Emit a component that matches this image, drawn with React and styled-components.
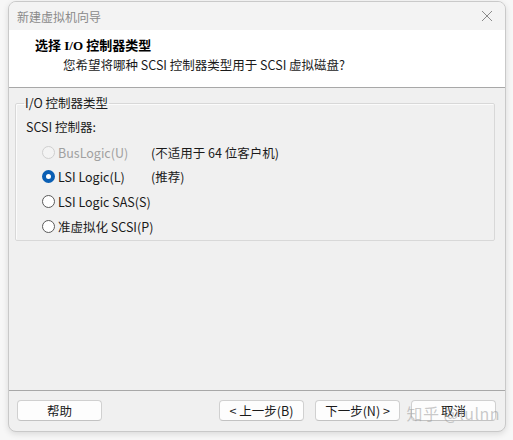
import styled, { createGlobalStyle } from 'styled-components';

const Global = createGlobalStyle`
  html, body { margin: 0; padding: 0; background: #f7f7f7; }
  body { font-family: "Segoe UI", "Noto Sans", "Noto Sans CJK SC", sans-serif; }
`;

const Page = styled.div`
  width: 513px;
  height: 440px;
  padding: 1px 0 0 8px;
  box-sizing: border-box;
`;

const Window = styled.div`
  position: relative;
  width: 498px;
  height: 431px;
  box-sizing: border-box;
  border: 1px solid #c9c9c9;
  border-radius: 8px;
  background: #f0f0f0;
  box-shadow: 0 2px 6px rgba(0, 0, 0, 0.12);
  overflow: hidden;
  display: flex;
  flex-direction: column;
  font-family: "Noto Sans CJK SC", "Noto Sans", sans-serif;
  font-size: 12px;
  color: #1a1a1a;
`;

const TitleBar = styled.div`
  height: 28px;
  display: flex;
  align-items: center;
  justify-content: space-between;
  padding: 0 12px 0 8px;
  background: #f3f3f3;
  color: #8a8a8a;
  font-size: 12px;
`;

const Close = styled.span`
  width: 12px;
  height: 12px;
  display: flex;
`;

const Header = styled.div`
  height: 58px;
  box-sizing: border-box;
  background: #ffffff;
  border-bottom: 1px solid #a8a8a8;
  padding: 8px 0 0 26px;
  display: flex;
  flex-direction: column;
`;

const HeaderTitle = styled.div`
  font-family: "Liberation Serif", "Noto Sans CJK SC", serif;
  font-weight: 700;
  font-size: 13px;
  line-height: 16px;
  color: #000;
`;

const HeaderSub = styled.div`
  font-size: 12.5px;
  line-height: 18px;
  margin-top: 2px;
  margin-left: 28px;
  color: #1a1a1a;
`;

const Body = styled.div`
  flex: 1;
  padding: 8px 10px 0 6px;
  border-bottom: 1px solid #a8a8a8;
`;

const Group = styled.fieldset`
  margin: 0;
  padding: 8px 0 0 10px;
  height: 145px;
  box-sizing: border-box;
  border: 1px solid #d8d8d8;
  border-radius: 2px;
  box-shadow: inset 1px 1px 0 #fbfbfb;
`;

const Legend = styled.legend`
  padding: 0 1px;
  margin-left: -2px;
  font-size: 12.5px;
  line-height: 14px;
`;

const Label = styled.div`
  font-size: 12.5px;
  line-height: 18px;
  margin-bottom: 7px;
`;

const Options = styled.div`
  display: flex;
  flex-direction: column;
  gap: 6.8px;
  padding-left: 16px;
`;

const Row = styled.div`
  display: flex;
  align-items: center;
  height: 18px;
  white-space: nowrap;
  font-size: 12.5px;
  color: ${({ $disabled }) => ($disabled ? '#a0a0a0' : '#1a1a1a')};
`;

const RadioName = styled.span`
  margin-left: 3px;
  width: 93px;
`;

const Note = styled.span`
  color: #1a1a1a;
`;

const Radio = styled.span`
  width: 13px;
  height: 13px;
  box-sizing: border-box;
  border-radius: 50%;
  flex-shrink: 0;
  border: ${({ $checked, $disabled }) =>
    $checked ? '4px solid #0a5fb4' : `1px solid ${$disabled ? '#cfcfcf' : '#5a5a5a'}`};
  background: ${({ $disabled }) => ($disabled ? '#f3f3f3' : '#ffffff')};
`;

const Footer = styled.div`
  height: 39px;
  display: flex;
  align-items: center;
  padding: 0 9px 1px 8px;
  gap: 11px;
`;

const Button = styled.button`
  width: 85px;
  height: 21px;
  box-sizing: border-box;
  border: 1px solid #d0d0d0;
  border-bottom-color: #c2c2c2;
  border-radius: 4px;
  background: #fdfdfd;
  font-family: "Noto Sans CJK SC", "Noto Sans", sans-serif;
  font-size: 12.5px;
  color: #1a1a1a;
  padding: 0;
  margin-left: ${({ $push }) => ($push ? 'auto' : '0')};
`;

const Watermark = styled.span`
  position: absolute;
  right: 5px;
  bottom: 6px;
  font-size: 16px;
  color: rgba(150, 150, 150, 0.5);
  letter-spacing: 0.5px;
  pointer-events: none;
`;

const options = [
  { name: 'BusLogic(U)', note: '(不适用于 64 位客户机)', disabled: true },
  { name: 'LSI Logic(L)', note: '(推荐)', checked: true },
  { name: 'LSI Logic SAS(S)' },
  { name: '准虚拟化 SCSI(P)' },
];

export default function App() {
  return (
    <Page>
      <Global />
      <Window>
        <TitleBar>
          <span>新建虚拟机向导</span>
          <Close>
            <svg width="12" height="12" viewBox="0 0 12 12">
              <path d="M1 1 L11 11 M11 1 L1 11" stroke="#8a8a8a" strokeWidth="1" />
            </svg>
          </Close>
        </TitleBar>
        <Header>
          <HeaderTitle>选择 I/O 控制器类型</HeaderTitle>
          <HeaderSub>您希望将哪种 SCSI 控制器类型用于 SCSI 虚拟磁盘?</HeaderSub>
        </Header>
        <Body>
          <Group>
            <Legend>I/O 控制器类型</Legend>
            <Label>SCSI 控制器:</Label>
            <Options>
              {options.map((o) => (
                <Row key={o.name} $disabled={o.disabled}>
                  <Radio $checked={o.checked} $disabled={o.disabled} />
                  <RadioName>{o.name}</RadioName>
                  {o.note && <Note>{o.note}</Note>}
                </Row>
              ))}
            </Options>
          </Group>
        </Body>
        <Footer>
          <Button>帮助</Button>
          <Button $push>&lt; 上一步(B)</Button>
          <Button>下一步(N) &gt;</Button>
          <Button>取消</Button>
        </Footer>
        <Watermark>知乎 @lulnn</Watermark>
      </Window>
    </Page>
  );
}
